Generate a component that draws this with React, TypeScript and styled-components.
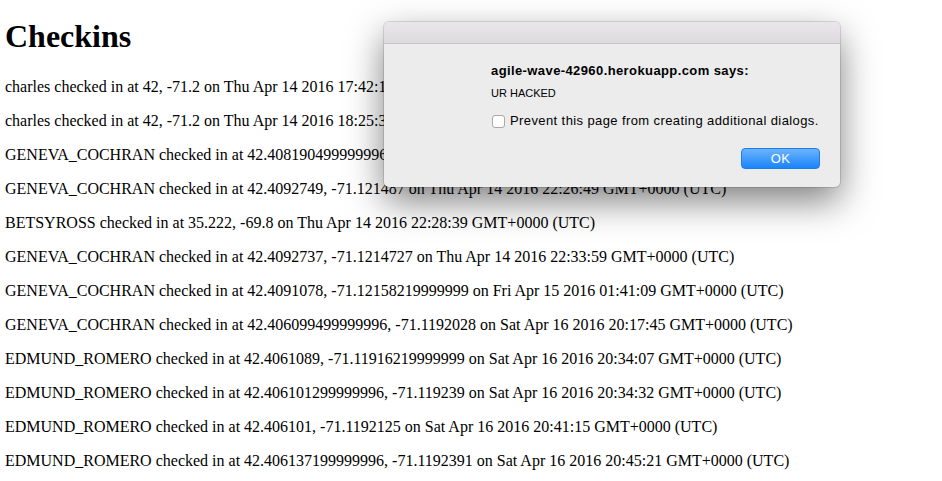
import React from "react";
import styled, { createGlobalStyle } from "styled-components";

const Global = createGlobalStyle`
  html, body { margin: 0; padding: 0; background: #fff; overflow: hidden; }
  body { font-family: "Liberation Serif", "Times New Roman", serif; color: #000; }
`;

const Page = styled.div`
  position: relative;
  width: 942px;
  height: 481px;
  padding: 18px 0 0 5px;
  box-sizing: border-box;
`;

const Title = styled.h1`
  margin: 0 0 24px;
  font-size: 32px;
  line-height: 36px;
  font-weight: bold;
`;

const Row = styled.p`
  margin: 16px 0;
  font-size: 16px;
  line-height: 18px;
  white-space: nowrap;
`;

const Dialog = styled.div`
  position: absolute;
  left: 384px;
  top: 22px;
  width: 456px;
  height: 165px;
  border-radius: 5px;
  background: #ececec;
  box-shadow: 0 14px 36px rgba(0, 0, 0, 0.5), 0 0 0 1px rgba(0, 0, 0, 0.12);
  overflow: hidden;
  display: flex;
  flex-direction: column;
  font-family: "Liberation Sans", Helvetica, Arial, sans-serif;
  color: #000;
`;

const TitleBar = styled.div`
  height: 21px;
  flex: none;
  background: linear-gradient(#e9e7e9, #dcdadc);
  border-bottom: 1px solid #c6c5c6;
`;

const Body = styled.div`
  flex: 1;
  display: flex;
  flex-direction: column;
  padding: 19px 20px 18px 107px;
`;

const Origin = styled.div`
  font-size: 13px;
  line-height: 16px;
  font-weight: bold;
  letter-spacing: 0.4px;
`;

const Message = styled.div`
  margin-top: 7px;
  font-size: 11px;
  line-height: 14px;
`;

const CheckRow = styled.label`
  margin-top: 13px;
  display: flex;
  align-items: center;
  gap: 5px;
  font-size: 13px;
  line-height: 16px;
  letter-spacing: 0.4px;
`;

const Box = styled.span`
  width: 13px;
  height: 13px;
  border: 1px solid #a9a9a9;
  border-radius: 3px;
  background: #fff;
  box-sizing: border-box;
  margin-left: 1px;
  flex: none;
`;

const Actions = styled.div`
  margin-top: auto;
  display: flex;
  justify-content: flex-end;
`;

const OkButton = styled.button`
  width: 79px;
  height: 21px;
  border: 1px solid #1a7ef0;
  border-radius: 4px;
  background: linear-gradient(#6bb4fb, #1b84fc);
  color: #fff;
  font-family: "Liberation Sans", Helvetica, Arial, sans-serif;
  font-size: 13px;
  line-height: 19px;
  letter-spacing: 0.4px;
  padding: 0;
  box-sizing: border-box;
`;

const rows = [
  "charles checked in at 42, -71.2 on Thu Apr 14 2016 17:42:15 GMT+0000 (UTC)",
  "charles checked in at 42, -71.2 on Thu Apr 14 2016 18:25:36 GMT+0000 (UTC)",
  "GENEVA_COCHRAN checked in at 42.408190499999996, -71.1214987 on Thu Apr 14 2016 22:24:11 GMT+0000 (UTC)",
  "GENEVA_COCHRAN checked in at 42.4092749, -71.121487 on Thu Apr 14 2016 22:26:49 GMT+0000 (UTC)",
  "BETSYROSS checked in at 35.222, -69.8 on Thu Apr 14 2016 22:28:39 GMT+0000 (UTC)",
  "GENEVA_COCHRAN checked in at 42.4092737, -71.1214727 on Thu Apr 14 2016 22:33:59 GMT+0000 (UTC)",
  "GENEVA_COCHRAN checked in at 42.4091078, -71.12158219999999 on Fri Apr 15 2016 01:41:09 GMT+0000 (UTC)",
  "GENEVA_COCHRAN checked in at 42.406099499999996, -71.1192028 on Sat Apr 16 2016 20:17:45 GMT+0000 (UTC)",
  "EDMUND_ROMERO checked in at 42.4061089, -71.11916219999999 on Sat Apr 16 2016 20:34:07 GMT+0000 (UTC)",
  "EDMUND_ROMERO checked in at 42.406101299999996, -71.119239 on Sat Apr 16 2016 20:34:32 GMT+0000 (UTC)",
  "EDMUND_ROMERO checked in at 42.406101, -71.1192125 on Sat Apr 16 2016 20:41:15 GMT+0000 (UTC)",
  "EDMUND_ROMERO checked in at 42.406137199999996, -71.1192391 on Sat Apr 16 2016 20:45:21 GMT+0000 (UTC)",
];

export default function App() {
  return (
    <Page>
      <Global />
      <Title>Checkins</Title>
      {rows.map((r, i) => (
        <Row key={i}>{r}</Row>
      ))}
      <Dialog>
        <TitleBar />
        <Body>
          <Origin>agile-wave-42960.herokuapp.com says:</Origin>
          <Message>UR HACKED</Message>
          <CheckRow>
            <Box />
            Prevent this page from creating additional dialogs.
          </CheckRow>
          <Actions>
            <OkButton>OK</OkButton>
          </Actions>
        </Body>
      </Dialog>
    </Page>
  );
}
